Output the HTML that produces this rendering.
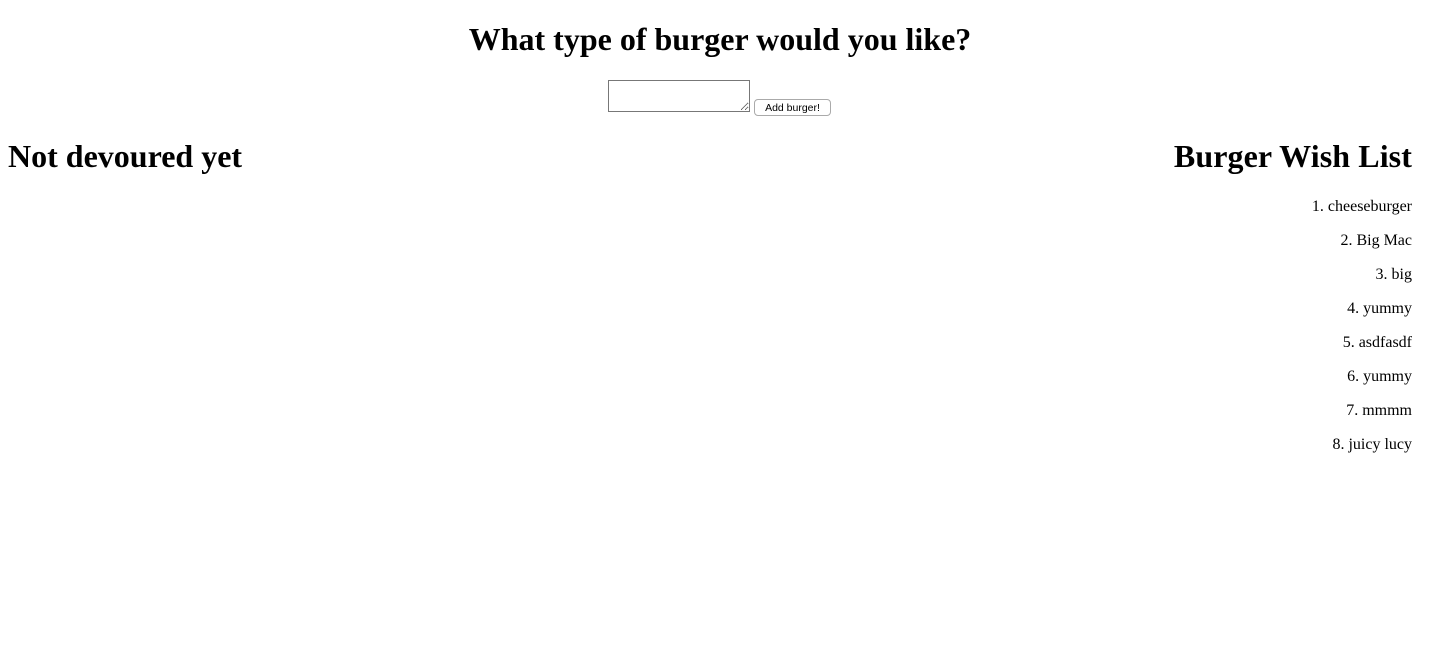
<!DOCTYPE html>
<html><head><style>
body{margin:0;width:1440px;height:662px;background:#fff;font-family:"Liberation Serif",serif;color:#000;position:relative;overflow:hidden}
h1{margin:0;font-size:32px;font-weight:bold;position:absolute;line-height:37px}
.t{left:0;width:1440px;text-align:center;top:21px}
textarea{position:absolute;left:608px;top:80px;width:142px;height:32px;box-sizing:border-box;border:1px solid #777;margin:0;padding:0;resize:both}
button{position:absolute;left:754px;top:99px;width:77px;height:17px;box-sizing:border-box;font:10.5px "Liberation Sans",sans-serif;background:#fff;border:1px solid #aaa;border-radius:4px;padding:0;color:#000}
ol{position:absolute;right:28px;top:190px;margin:0;padding:0;list-style:none;text-align:right;font-size:16px}
li{height:34px;line-height:34px}
</style></head><body>
<h1 class="t">What type of burger would you like?</h1>
<textarea></textarea>
<button>Add burger!</button>
<h1 style="left:8px;top:138px">Not devoured yet</h1>
<h1 style="right:28px;top:138px;letter-spacing:0.1px">Burger Wish List</h1>
<ol>
<li>1. cheeseburger</li><li>2. Big Mac</li><li>3. big</li><li>4. yummy</li><li>5. asdfasdf</li><li>6. yummy</li><li>7. mmmm</li><li>8. juicy lucy</li>
</ol>
</body></html>
